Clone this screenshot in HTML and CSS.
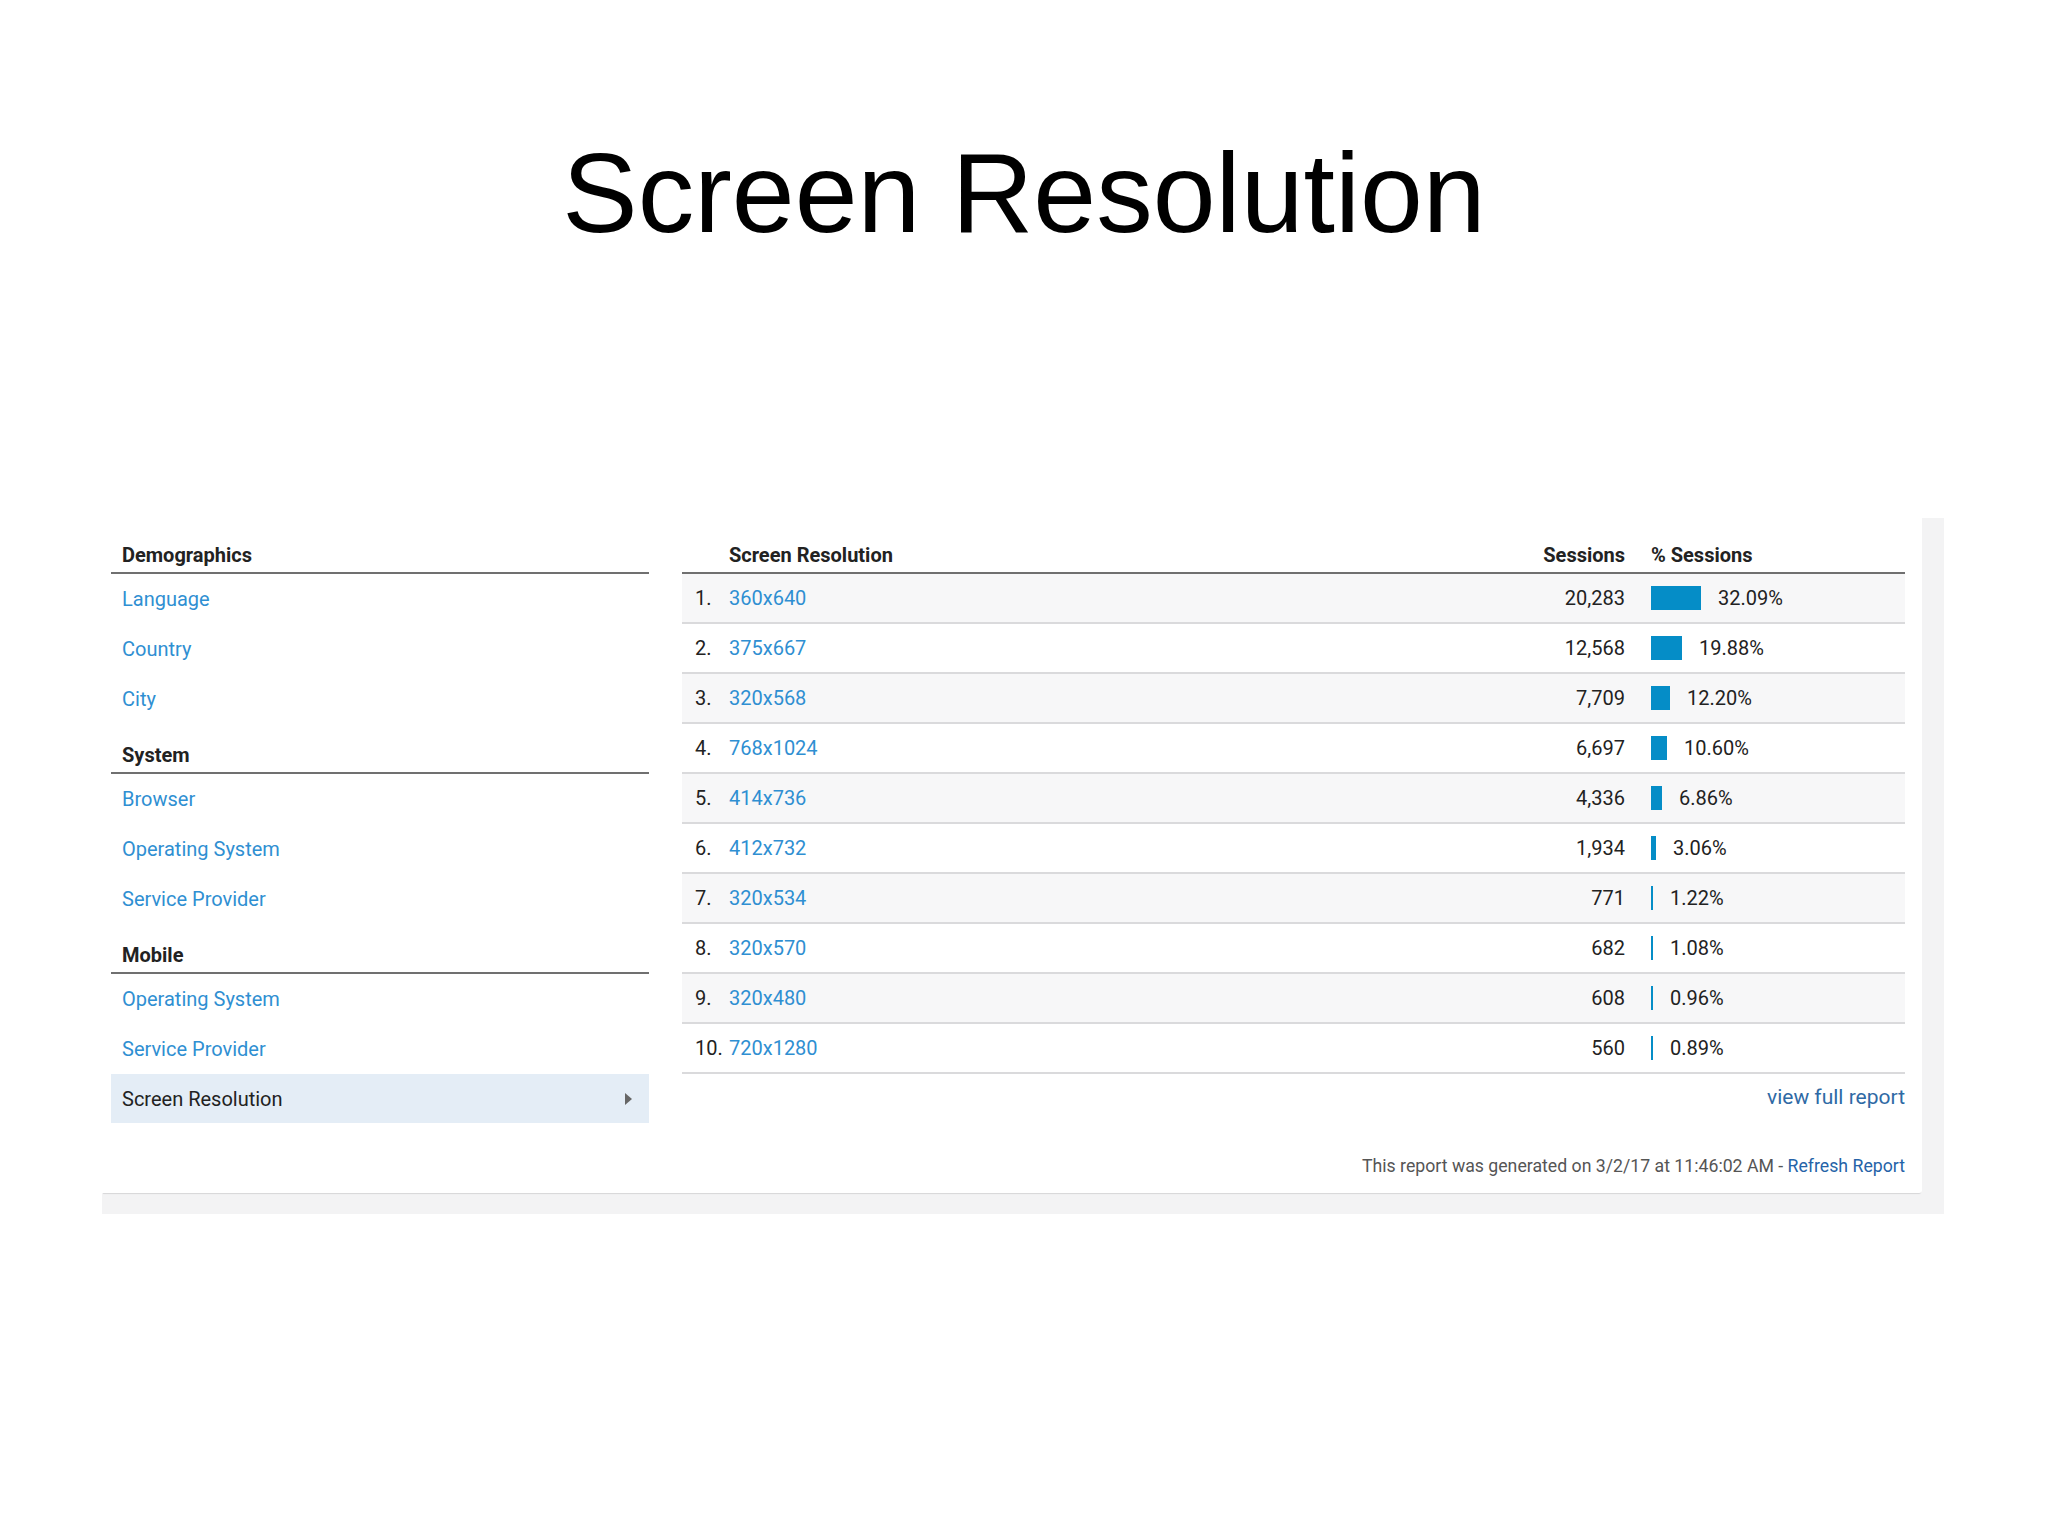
FILE: index.html
```html
<!DOCTYPE html>
<html>
 <head>
  <meta charset="UTF-8">
  <title>Screen Resolution</title>
  <link rel="stylesheet" href="styles.css">
 </head>
 <body>
  <h1 class="title">Screen Resolution</h1>
  <div class="frame">
   <div class="card">
    <div class="body">
     <div class="nav">
      <div class="nav-head">Demographics</div>
      <a class="nav-item">Language</a>
      <a class="nav-item">Country</a>
      <a class="nav-item">City</a>
      <div class="nav-head">System</div>
      <a class="nav-item">Browser</a>
      <a class="nav-item">Operating System</a>
      <a class="nav-item">Service Provider</a>
      <div class="nav-head">Mobile</div>
      <a class="nav-item">Operating System</a>
      <a class="nav-item">Service Provider</a>
      <div class="nav-item current">Screen Resolution<span class="arrow"></span></div>
     </div>
     <div class="report">
      <div class="row head">
       <span class="rank"></span>
       <span class="res">Screen Resolution</span>
       <span class="sess">Sessions</span>
       <span class="pct">% Sessions</span>
      </div>
      <div class="row"><span class="rank">1.</span><a class="res">360x640</a><span class="sess">20,283</span><span class="pct"><i class="bar" style="width:50px"></i>32.09%</span></div>
      <div class="row"><span class="rank">2.</span><a class="res">375x667</a><span class="sess">12,568</span><span class="pct"><i class="bar" style="width:31px"></i>19.88%</span></div>
      <div class="row"><span class="rank">3.</span><a class="res">320x568</a><span class="sess">7,709</span><span class="pct"><i class="bar" style="width:19px"></i>12.20%</span></div>
      <div class="row"><span class="rank">4.</span><a class="res">768x1024</a><span class="sess">6,697</span><span class="pct"><i class="bar" style="width:16px"></i>10.60%</span></div>
      <div class="row"><span class="rank">5.</span><a class="res">414x736</a><span class="sess">4,336</span><span class="pct"><i class="bar" style="width:11px"></i>6.86%</span></div>
      <div class="row"><span class="rank">6.</span><a class="res">412x732</a><span class="sess">1,934</span><span class="pct"><i class="bar" style="width:5px"></i>3.06%</span></div>
      <div class="row"><span class="rank">7.</span><a class="res">320x534</a><span class="sess">771</span><span class="pct"><i class="bar" style="width:2px"></i>1.22%</span></div>
      <div class="row"><span class="rank">8.</span><a class="res">320x570</a><span class="sess">682</span><span class="pct"><i class="bar" style="width:2px"></i>1.08%</span></div>
      <div class="row"><span class="rank">9.</span><a class="res">320x480</a><span class="sess">608</span><span class="pct"><i class="bar" style="width:2px"></i>0.96%</span></div>
      <div class="row"><span class="rank">10.</span><a class="res">720x1280</a><span class="sess">560</span><span class="pct"><i class="bar" style="width:2px"></i>0.89%</span></div>
      <div class="more"><a>view full report</a></div>
     </div>
    </div>
    <div class="foot">This report was generated on 3/2/17 at 11:46:02 AM - <a>Refresh Report</a></div>
   </div>
  </div>
 </body>
</html>
```

FILE: styles.css
```css
body {
 margin: 0;
 background: #fff;
 font-family: Roboto, "Liberation Sans", Arial, sans-serif;
 color: #222;
}
a {
 color: #2f8fd2;
 text-decoration: none;
 cursor: pointer;
}

.title {
 margin: 137px 0 0;
 font-family: "Liberation Sans", Arial, sans-serif;
 font-weight: normal;
 font-size: 113px;
 line-height: 1;
 text-align: center;
 color: #000;
}

/* grey frame round the card, only seen on the right and bottom */
.frame {
 width: 1820px;
 margin: 268px 0 0 102px;
 padding: 0 22px 21px 0;
 background: #f3f3f4;
}
.card {
 background: #fff;
 padding: 6px 17px 0 9px;
 border-bottom-right-radius: 3px;
 box-shadow: 0 2px 1px -1px #d6d6d8;
}
.body {
 display: flex;
 gap: 33px;
}

.nav {
 width: 538px;
 font-size: 20px;
}
.nav-head {
 padding: 19px 11px 5px;
 line-height: 24px;
 font-weight: bold;
 border-bottom: 2px solid #707070;
}
.nav-item {
 display: flex;
 align-items: center;
 height: 50px;
 padding: 0 11px;
}
.nav-item.current {
 color: #222;
 background: #e4edf6;
 justify-content: space-between;
 height: 49px;
 padding-right: 17px;
}
.arrow {
 width: 0;
 height: 0;
 border-left: 7px solid #666;
 border-top: 6px solid transparent;
 border-bottom: 6px solid transparent;
}

.report {
 flex: 1;
 font-size: 20px;
}
.row {
 display: flex;
 align-items: center;
 height: 48px;
 border-bottom: 2px solid #dadadc;
 color: #222;
}
.row:nth-child(even) {
 background: #f7f7f8;
}
.row.head {
 height: auto;
 padding: 19px 0 5px;
 line-height: 24px;
 font-weight: bold;
 border-bottom-color: #707070;
}
.rank {
 width: 34px;
 padding-left: 13px;
}
.res {
 flex: 1;
}
.sess {
 text-align: right;
}
.pct {
 display: flex;
 align-items: center;
 width: 254px;
 margin-left: 26px;
}
.bar {
 display: block;
 height: 24px;
 margin-right: 17px;
 background: #058dc7;
}
.more {
 text-align: right;
 line-height: 46px;
 font-size: 21px;
}
.more a {
 color: #2f6aa5;
}
.foot {
 margin-top: 31px;
 padding-bottom: 15px;
 text-align: right;
 line-height: 24px;
 font-size: 17.7px;
 color: #555;
}
.foot a {
 color: #2563a8;
}
```
